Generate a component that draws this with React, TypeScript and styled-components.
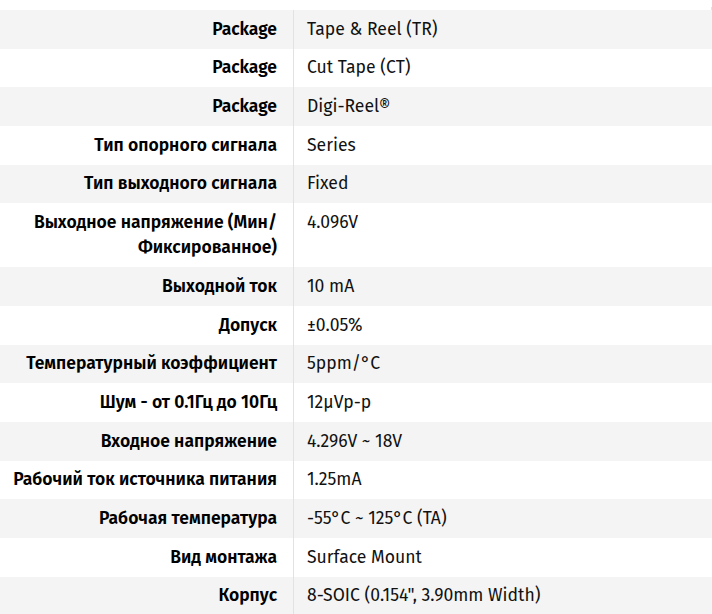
import React from "react";
import styled, { createGlobalStyle } from "styled-components";

const Global = createGlobalStyle`
  html, body { margin: 0; padding: 0; background: #ffffff; }
  body { font-family: "Fira Sans", "Open Sans", "Noto Sans", sans-serif; }
`;

const Table = styled.div`
  width: 712px;
  display: flex;
  flex-direction: column;
`;

const Row = styled.div<{ $shaded?: boolean }>`
  display: grid;
  grid-template-columns: 294px 1fr;
  background: ${(p) => (p.$shaded ? "#f4f4f4" : "#ffffff")};
`;

const Lead = styled.div`
  display: grid;
  grid-template-columns: 294px 1fr;
  height: 10px;
`;

const LeadCell = styled.div`
  margin-top: 7px;
  border-right: 1px solid #e2e2e2;
`;

const Label = styled.div`
  text-align: right;
  padding: 6.7px 16px 6.7px 8px;
  border-right: 1px solid #e2e2e2;
  font-size: 17.5px;
  font-weight: 600;
  line-height: 25.3px;
  color: #000000;
`;

const Value = styled.div`
  padding: 6.7px 13px;
  font-size: 17.6px;
  font-weight: 400;
  line-height: 25.3px;
  color: #111111;
`;

const rows: [string, string][] = [
  ["Package", "Tape & Reel (TR)"],
  ["Package", "Cut Tape (CT)"],
  ["Package", "Digi-Reel®"],
  ["Тип опорного сигнала", "Series"],
  ["Тип выходного сигнала", "Fixed"],
  ["Выходное напряжение (Мин/\u200BФиксированное)", "4.096V"],
  ["Выходной ток", "10 mA"],
  ["Допуск", "±0.05%"],
  ["Температурный коэффициент", "5ppm/°C"],
  ["Шум - от 0.1Гц до 10Гц", "12µVp-p"],
  ["Входное напряжение", "4.296V ~ 18V"],
  ["Рабочий ток источника питания", "1.25mA"],
  ["Рабочая температура", "-55°C ~ 125°C (TA)"],
  ["Вид монтажа", "Surface Mount"],
  ["Корпус", "8-SOIC (0.154\", 3.90mm Width)"],
];

export default function App() {
  return (
    <>
      <Global />
      <Table>
        <Lead>
          <div />
          <LeadCell />
        </Lead>
        {rows.map(([k, v], i) => (
          <Row key={i} $shaded={i % 2 === 0}>
            <Label>{k}</Label>
            <Value>{v}</Value>
          </Row>
        ))}
      </Table>
    </>
  );
}
